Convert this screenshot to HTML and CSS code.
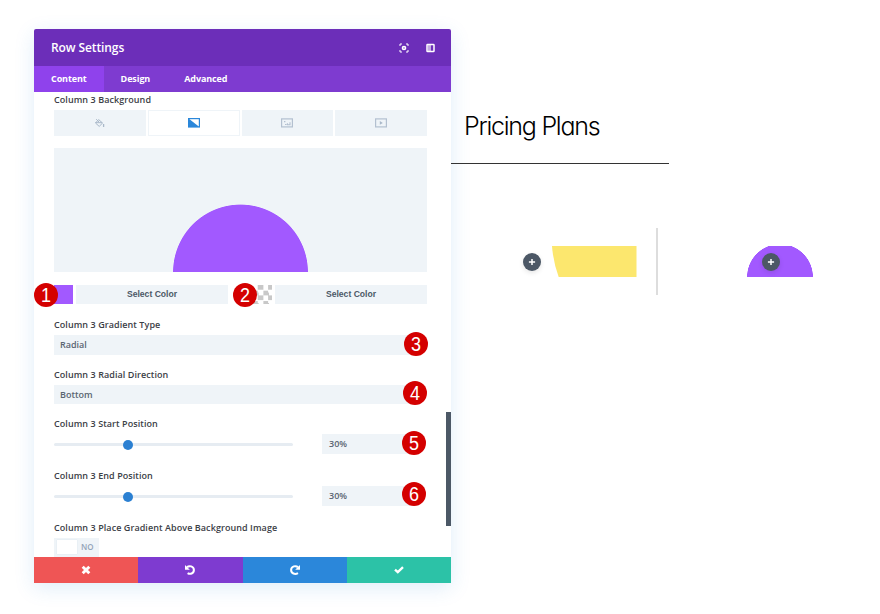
FILE: index.html
```html
<!DOCTYPE html>
<html lang="en">
<head>
    <meta charset="UTF-8">
    <meta name="viewport" content="width=device-width, initial-scale=1.0">
    <title>Row Settings</title>
    <link rel="stylesheet" href="styles.css">
</head>
<body>

    <div class="modal">
        <div class="modal-header">
            <h2>Row Settings</h2>
            <div class="header-icons">
                <svg width="10" height="10" viewBox="0 0 10 10" fill="none" stroke="#fff" stroke-width="1">
                    <path d="M1 3V1H3M7 1H9V3M9 7V9H7M3 9H1V7"/>
                    <circle cx="5" cy="5" r="1.5" stroke-width="1.7"/>
                </svg>
                <svg width="9" height="10" viewBox="0 0 9 10" fill="none" stroke="#fff">
                    <rect x="1" y="1.4" width="7" height="7.2" rx="0.6" stroke-width="1.5"/>
                    <path d="M4 1V9" stroke-width="1.2"/>
                    <path d="M2.4 2V8" stroke-width="1.2" stroke-opacity="0.6"/>
                </svg>
            </div>
        </div>

        <div class="tabs">
            <a class="tab active">Content</a>
            <a class="tab">Design</a>
            <a class="tab">Advanced</a>
        </div>

        <div class="modal-body">
            <div class="label">Column 3 Background</div>
            <div class="bg-tabs">
                <div class="bg-tab">
                    <svg width="12" height="10" viewBox="0 0 12 10" fill="none" stroke="#a9b8c9">
                        <path d="M4.6 1.6L8.6 5L5.2 8.4L1.5 5Z"/>
                        <path d="M1.5 4.7H8M2.2 1.2L5 4"/>
                        <path d="M9.6 6V9" stroke-width="1.3"/>
                    </svg>
                </div>
                <div class="bg-tab active">
                    <svg width="12" height="10" viewBox="0 0 12 10">
                        <rect x="0.6" y="0.6" width="10.8" height="8.4" fill="#fff" stroke="#2b87da" stroke-width="1.2"/>
                        <path d="M0.6 0.6V9H11.4Z" fill="#2b87da"/>
                    </svg>
                </div>
                <div class="bg-tab">
                    <svg width="12" height="10" viewBox="0 0 12 10" fill="none" stroke="#b3c0d0">
                        <rect x="0.6" y="0.9" width="10.8" height="8" stroke-width="1.2"/>
                        <path d="M3 3.6H4.4M4 6.5H5.5M6.4 5.3V6.8H9V4.2" stroke-width="1.1"/>
                    </svg>
                </div>
                <div class="bg-tab">
                    <svg width="12" height="10" viewBox="0 0 12 10">
                        <rect x="0.6" y="0.9" width="10.8" height="8" fill="none" stroke="#b3c0d0" stroke-width="1.2"/>
                        <path d="M4.8 3L7.8 4.9L4.8 6.8Z" fill="#a9b8c9"/>
                    </svg>
                </div>
            </div>

            <div class="gradient-preview"></div>

            <div class="colors">
                <div class="color">
                    <div class="swatch purple"></div>
                    <button class="select-color">Select Color</button>
                    <span class="badge badge-1"><b>1</b></span>
                </div>
                <div class="color">
                    <div class="swatch transparent"></div>
                    <button class="select-color">Select Color</button>
                    <span class="badge badge-2"><b>2</b></span>
                </div>
            </div>

            <div class="field">
                <div class="label">Column 3 Gradient Type</div>
                <div class="select">Radial</div>
                <span class="badge badge-3"><b>3</b></span>
            </div>

            <div class="field">
                <div class="label">Column 3 Radial Direction</div>
                <div class="select">Bottom</div>
                <span class="badge badge-4"><b>4</b></span>
            </div>

            <div class="field range-field">
                <div class="label">Column 3 Start Position</div>
                <div class="range">
                    <div class="track"><div class="knob"></div></div>
                    <div class="value">30%</div>
                </div>
                <span class="badge badge-5"><b>5</b></span>
            </div>

            <div class="field range-field">
                <div class="label">Column 3 End Position</div>
                <div class="range">
                    <div class="track"><div class="knob"></div></div>
                    <div class="value">30%</div>
                </div>
                <span class="badge badge-6"><b>6</b></span>
            </div>

            <div class="label">Column 3 Place Gradient Above Background Image</div>
            <div class="toggle">
                <div class="toggle-button"></div>
                <span>NO</span>
            </div>

            <div class="scrollbar"></div>
        </div>

        <div class="modal-footer">
            <div class="action discard">
                <svg width="10" height="10" viewBox="0 0 10 10" stroke="#fff" stroke-width="2.9">
                    <path d="M1.7 1.7L8.3 8.3M8.3 1.7L1.7 8.3"/>
                </svg>
            </div>
            <div class="action undo">
                <svg width="12" height="12" viewBox="0 0 12 12" fill="none">
                    <path d="M3 3.3C5 1.3 9.9 2 9.9 6C9.9 9.6 6 10.6 3.6 9.1" stroke="#fff" stroke-width="2"/>
                    <path d="M1 1.1V5.7H5.8Z" fill="#fff"/>
                </svg>
            </div>
            <div class="action redo">
                <svg width="12" height="12" viewBox="0 0 12 12" fill="none">
                    <path d="M9 3.3C7 1.3 2.1 2 2.1 6C2.1 9.6 6 10.8 9 9.1" stroke="#fff" stroke-width="2"/>
                    <path d="M11 1.1V5.7H6.2Z" fill="#fff"/>
                </svg>
            </div>
            <div class="action save">
                <svg width="10" height="8" viewBox="0 0 10 8" fill="none" stroke="#fff" stroke-width="2.3">
                    <path d="M1 3.6L3.8 6.2L9 1.2"/>
                </svg>
            </div>
        </div>
    </div>

    <div class="page">
        <h1>Pricing Plans</h1>
        <div class="modules">
            <div class="add">
                <svg width="8" height="8" viewBox="0 0 8 8" stroke="#fff" stroke-width="1.5"><path d="M4 0.9V7.1M0.9 4H7.1"/></svg>
            </div>
            <svg class="yellow" width="85" height="31" viewBox="0 0 85 31">
                <path d="M0 0H84.5V31H6.7Q1.2 16 0 0Z" fill="#fce76e"/>
            </svg>
            <div class="divider"></div>
            <div class="half-circle">
                <div class="add">
                    <svg width="8" height="8" viewBox="0 0 8 8" stroke="#fff" stroke-width="1.5"><path d="M4 0.9V7.1M0.9 4H7.1"/></svg>
                </div>
            </div>
        </div>
    </div>

</body>
</html>
```

FILE: styles.css
```css
* {
    box-sizing: border-box;
}

body {
    margin: 0;
    width: 880px;
    height: 614px;
    display: flex;
    align-items: flex-start;
    background: #fff;
    font-family: "Open Sans", Arial, sans-serif;
    overflow: hidden;
}

svg {
    display: block;
    flex: none;
}

/* settings modal */
.modal {
    width: 417px;
    height: 554px;
    margin: 29px 0 0 34px;
    flex: none;
    display: flex;
    flex-direction: column;
    border-radius: 3px 3px 0 0;
    box-shadow: 0 5px 20px rgba(43, 135, 218, 0.15);
}

.modal-header {
    height: 37px;
    padding: 0 16px 0 17px;
    display: flex;
    align-items: center;
    justify-content: space-between;
    background: #6c2eb9;
    border-radius: 2px 2px 0 0;
}

.modal-header h2 {
    margin: 0;
    font-size: 12px;
    font-weight: 600;
    letter-spacing: -0.1px;
    color: #fff;
}

.header-icons {
    display: flex;
    align-items: center;
    gap: 17px;
}

.tabs {
    height: 26px;
    display: flex;
    background: #7e3bd0;
}

.tab {
    padding: 0 17px;
    font-size: 9px;
    font-weight: 700;
    line-height: 26px;
    letter-spacing: -0.1px;
    color: #fff;
}

.tab.active {
    background: #8f42ec;
}

.modal-body {
    position: relative;
    height: 465px;
    padding-left: 20px;
    background: #fff;
}

.label {
    height: 18px;
    font-size: 9px;
    font-weight: 600;
    line-height: 16px;
    letter-spacing: 0.07px;
    color: #3b4046;
    white-space: nowrap;
}

.modal-body > .label:first-child {
    line-height: 15px;
}

.bg-tabs {
    width: 373px;
    display: grid;
    grid-template-columns: repeat(4, 1fr);
    gap: 2px;
}

.bg-tab {
    height: 26px;
    display: flex;
    align-items: center;
    justify-content: center;
    background: #eff4f8;
}

.bg-tab.active {
    background: #fff;
    border: 1px solid #eff4f8;
}

.gradient-preview {
    width: 373px;
    height: 124px;
    margin: 12px 0 13px;
    background: radial-gradient(circle at 50% 100%, #a259ff 67px, #eff4f8 67.8px);
}

.colors {
    width: 373px;
    display: flex;
    gap: 25px;
}

.color {
    position: relative;
    flex: 1;
    display: flex;
    gap: 3px;
}

.swatch {
    width: 19px;
    height: 19px;
}

.swatch.purple {
    background: #a259ff;
}

.swatch.transparent {
    background: conic-gradient(#c8c8c8 25%, #fff 0 50%, #c8c8c8 0 75%, #fff 0) 0 0 / 10.4px 10.4px;
}

.select-color {
    flex: 1;
    height: 19px;
    padding: 0 0 1px;
    border: none;
    background: #eff4f8;
    font: bold 8.6px "Liberation Sans", Arial, sans-serif;
    color: #4c5866;
}

.field {
    position: relative;
    height: 49.5px;
}

.colors + .field {
    margin-top: 13px;
}

.range-field {
    height: 52px;
}

.select,
.value {
    height: 19.5px;
    padding-left: 6px;
    background: #eff4f8;
    font-size: 9px;
    font-weight: 600;
    line-height: 19px;
    color: #5a6572;
}

.select {
    width: 361px;
}

.range {
    display: flex;
    align-items: center;
    gap: 29px;
}

.track {
    width: 239px;
    height: 3px;
    margin-top: 2px;
    border-radius: 2px;
    background: #e6ecf2;
}

.knob {
    width: 10px;
    height: 10px;
    margin: -3.5px 0 0 68.5px;
    border-radius: 50%;
    background: #2b80d2;
}

.value {
    width: 92px;
    padding-left: 7px;
}

.toggle {
    width: 45px;
    height: 19px;
    padding: 0 3px 2px;
    display: flex;
    align-items: center;
    gap: 4px;
    background: #eff4f8;
    font-size: 8px;
    font-weight: 600;
    color: #94a4b8;
}

.toggle-button {
    width: 20px;
    height: 14px;
    background: #fff;
    box-shadow: 0 0 1px #cdd8e3;
}

.scrollbar {
    position: absolute;
    top: 320px;
    right: 0;
    width: 5px;
    height: 114px;
    background: #4c5866;
}

.modal-footer {
    height: 26px;
    display: flex;
    position: relative;
}

.action {
    flex: 1;
    display: flex;
    align-items: center;
    justify-content: center;
}

.discard {
    background: #ef5555;
}

.undo {
    background: #7e3bd0;
}

.redo {
    background: #2b87da;
}

.save {
    background: #2cc2a7;
}

/* numbered callouts */
.badge {
    position: absolute;
    width: 24px;
    height: 24px;
    border-radius: 50%;
    background: #d40000;
    color: #fff;
    font: 20px/25px "Liberation Sans", Arial, sans-serif;
    text-align: center;
}

.badge b {
    display: block;
    font-weight: normal;
    transform: scaleX(0.9);
}

.badge-1 {
    left: -20px;
    top: -2px;
}

.badge-2 {
    left: -20px;
    top: -2px;
}

.badge-3 {
    left: 350px;
    top: 15px;
}

.badge-4 {
    left: 349px;
    top: 14.5px;
}

.badge-5 {
    left: 348px;
    top: 15px;
}

.badge-6 {
    left: 347.5px;
    top: 14px;
}

/* page behind the modal */
.page {
    flex: 1;
    padding-top: 108px;
}

.page h1 {
    width: 218px;
    height: 56px;
    margin: 0;
    padding-left: 13px;
    border-bottom: 1px solid #333;
    font-family: Inter, sans-serif;
    font-size: 25px;
    font-weight: 300;
    font-feature-settings: "cv11";
    line-height: 37px;
    letter-spacing: -1.25px;
    color: #000;
    white-space: nowrap;
}

.modules {
    display: flex;
    align-items: center;
    margin-top: 64px;
    padding-left: 72px;
}

.add {
    width: 18px;
    height: 18px;
    flex: none;
    display: flex;
    align-items: center;
    justify-content: center;
    border-radius: 50%;
    background: #4c5866;
    box-shadow: 0 2px 5px rgba(0, 0, 0, 0.1);
}

.yellow {
    margin-left: 11px;
}

.divider {
    width: 2px;
    height: 67px;
    margin: 0 89px 0 18.5px;
    background: #ddd;
}

.half-circle {
    width: 66px;
    height: 31px;
    padding: 7px 0 0 15px;
    background: radial-gradient(circle at 50% 100%, #a259ff 32.6px, transparent 33.2px);
}
```
